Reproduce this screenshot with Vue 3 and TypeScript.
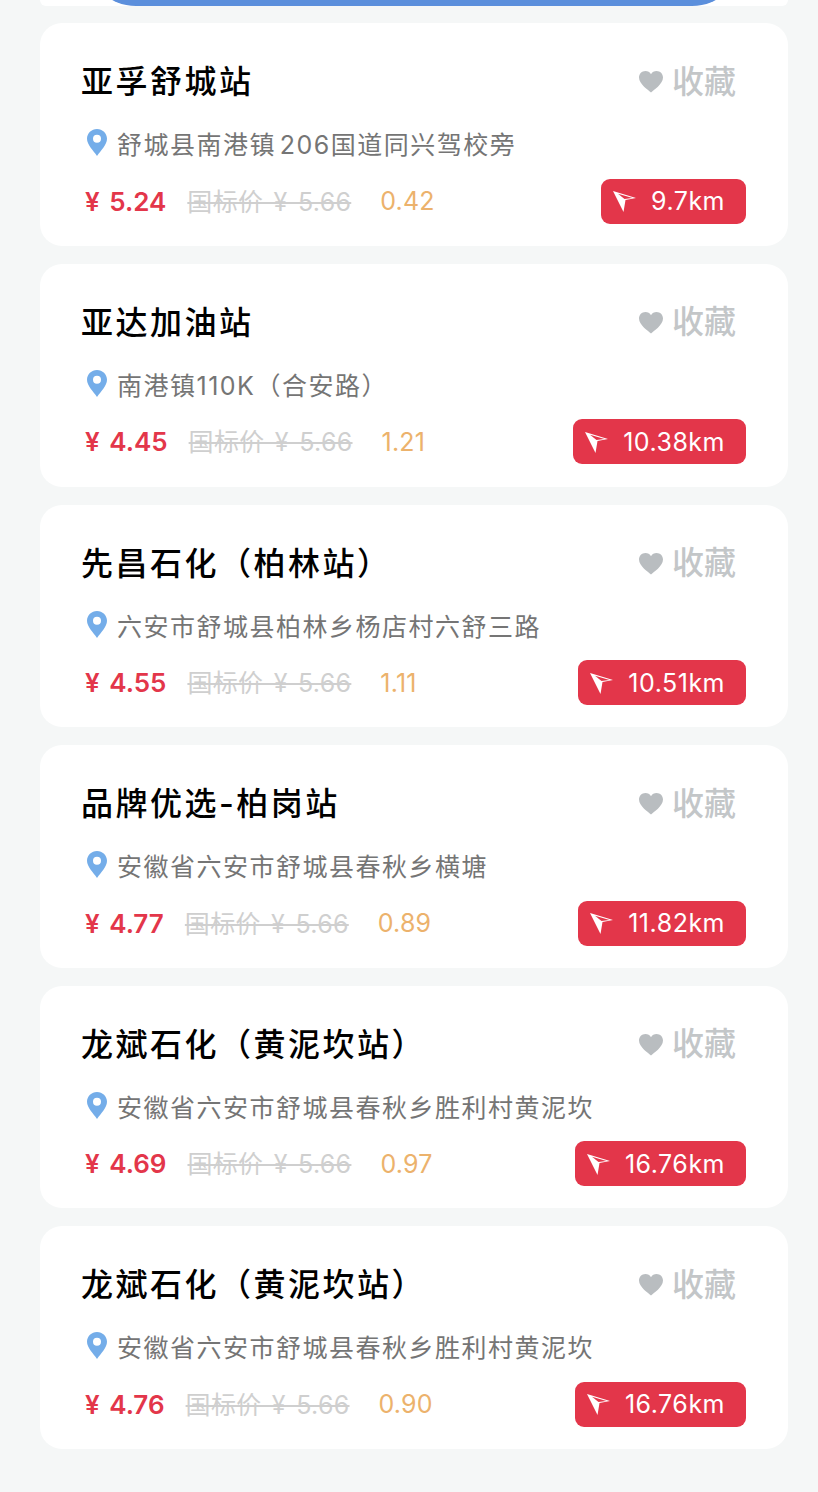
<template>
  <div class="page">
    <div class="stub">
      <div class="stub-btn"></div>
    </div>

    <div v-for="(s, i) in stations" :key="i" class="card">
      <div class="head">
        <div class="name">{{ s.name }}</div>
        <div class="fav">
          <svg class="heart" viewBox="0 0 24 22" width="24" height="22">
            <path d="M12 21.5 C9.5 19.2 0 13.4 0 6.6 C0 2.8 2.9 0 6.4 0 C8.8 0 10.9 1.2 12 3.2 C13.1 1.2 15.2 0 17.6 0 C21.1 0 24 2.8 24 6.6 C24 13.4 14.5 19.2 12 21.5 Z" fill="#b9bdc0" />
          </svg>
          <span>收藏</span>
        </div>
      </div>

      <div class="addr">
        <svg class="pin" viewBox="0 0 20 27" width="20" height="27">
          <path fill-rule="evenodd" d="M10 0 C15.5 0 20 4.3 20 9.8 C20 15.5 14 21.5 10 27 C6 21.5 0 15.5 0 9.8 C0 4.3 4.5 0 10 0 Z M10 5.8 A4 4 0 1 0 10 13.8 A4 4 0 1 0 10 5.8 Z" fill="#74ade9" />
        </svg>
        <span>{{ s.addr }}</span>
      </div>

      <div class="foot">
        <span class="price">¥ {{ s.price }}</span>
        <span class="std">国标价 ¥ 5.66</span>
        <span class="off">{{ s.off }}</span>
        <div class="dist">
          <svg class="arrow" viewBox="0 0 24 24" width="24" height="24">
            <path d="M1 2 L24 9 L13.5 11 L11.5 23 Z" fill="#fff" />
            <path d="M12.5 10 L20.5 9 L6 4.8 Z" fill="#e3364a" />
          </svg>
          <span>{{ s.dist }}</span>
        </div>
      </div>
    </div>
  </div>
</template>

<script setup lang="ts">
interface Station {
  name: string
  addr: string
  price: string
  off: string
  dist: string
}

const stations: Station[] = [
  { name: '亚孚舒城站', addr: '舒城县南港镇\u200a206国道同兴驾校旁', price: '5.24', off: '0.42', dist: '9.7km' },
  { name: '亚达加油站', addr: '南港镇110K（合安路）', price: '4.45', off: '1.21', dist: '10.38km' },
  { name: '先昌石化（柏林站）', addr: '六安市舒城县柏林乡杨店村六舒三路', price: '4.55', off: '1.11', dist: '10.51km' },
  { name: '品牌优选-柏岗站', addr: '安徽省六安市舒城县春秋乡横塘', price: '4.77', off: '0.89', dist: '11.82km' },
  { name: '龙斌石化（黄泥坎站）', addr: '安徽省六安市舒城县春秋乡胜利村黄泥坎', price: '4.69', off: '0.97', dist: '16.76km' },
  { name: '龙斌石化（黄泥坎站）', addr: '安徽省六安市舒城县春秋乡胜利村黄泥坎', price: '4.76', off: '0.90', dist: '16.76km' },
]
</script>

<style>
html,
body {
  margin: 0;
  background: #f5f7f7;
}
</style>

<style scoped>
.page {
  height: 1492px;
  overflow: hidden;
  box-sizing: border-box;
  padding: 0 30px 0 40px;
  background: #f5f7f7;
  font-family: Inter, "Noto Sans CJK SC", sans-serif;
}

.stub {
  height: 6.4px;
  background: #fff;
  border-radius: 0 0 22px 22px;
  margin-bottom: 17px;
  display: flex;
  justify-content: center;
  align-items: flex-end;
  overflow: hidden;
}

.stub-btn {
  flex: none;
  width: 656px;
  height: 100px;
  background: #5b8fdc;
  border-radius: 50px;
}

.card {
  height: 222.6px;
  box-sizing: border-box;
  margin-bottom: 18px;
  padding: 36px 42px 0 41px;
  background: #fff;
  border-radius: 22px;
}

.head {
  display: flex;
  justify-content: space-between;
  align-items: center;
  height: 46px;
}

.name {
  font-size: 32px;
  line-height: 46px;
  letter-spacing: 2.5px;
  color: #000;
  font-weight: 500;
}

.fav {
  display: flex;
  align-items: center;
  padding-right: 10px;
  margin-top: -1px;
  color: #c3c6c8;
  font-size: 32px;
  line-height: 46px;
  font-weight: 500;
}

.heart {
  margin-right: 9px;
  margin-top: 1px;
}

.addr {
  display: flex;
  align-items: center;
  height: 36px;
  margin-top: 20px;
  padding-left: 6px;
  font-size: 25px;
  letter-spacing: 1.5px;
  color: #757575;
}

.pin {
  margin-right: 10px;
  margin-top: -1px;
}

.foot {
  display: flex;
  align-items: center;
  height: 46px;
  margin-top: 17px;
  padding-left: 4px;
}

.price {
  font-size: 26px;
  font-weight: 600;
  word-spacing: 3px;
  color: #e3364a;
  margin: 0 21px 0 0;
}

.std {
  font-size: 25px;
  letter-spacing: 0.3px;
  word-spacing: 3px;
  color: #cfcfcf;
  text-decoration: line-through;
  margin: 0 29px 3px 0;
}

.off {
  font-size: 25px;
  letter-spacing: 0.2px;
  color: #ecb26c;
}

.dist {
  margin-left: auto;
  display: flex;
  align-items: center;
  height: 45px;
  box-sizing: border-box;
  padding: 0 21px 0 11px;
  background: #e3364a;
  border-radius: 9px;
  color: #fff;
  font-size: 25px;
  letter-spacing: 0.5px;
}

.arrow {
  margin-right: 15px;
}
</style>
